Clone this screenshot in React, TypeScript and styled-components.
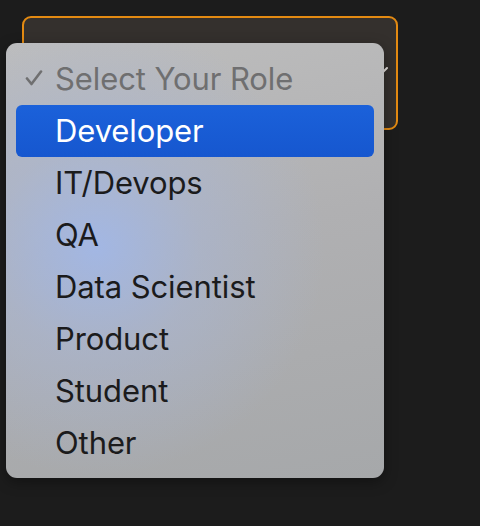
import styled, { createGlobalStyle } from "styled-components"

const GlobalStyle = createGlobalStyle`
  html, body {
    margin: 0;
    padding: 0;
    background: #1c1c1c;
  }
  body {
    font-family: Inter, "Liberation Sans", Arial, sans-serif;
  }
`

const Page = styled.div`
  width: 480px;
  height: 526px;
  padding: 16px 0 0 22px;
  box-sizing: border-box;
`

const SelectWrapper = styled.div`
  position: relative;
  width: 376px;
`

const SelectBox = styled.div`
  box-sizing: border-box;
  width: 376px;
  height: 114px;
  border: 2px solid #e38a12;
  border-radius: 9px;
  background: #34302d;
  display: flex;
  align-items: center;
  justify-content: flex-end;
  padding: 0 6px 2px 0;
`

const Menu = styled.div`
  position: absolute;
  left: -16px;
  top: 27px;
  width: 378px;
  height: 435px;
  box-sizing: border-box;
  padding: 10px 10px 9px;
  border-radius: 11px;
  background:
    radial-gradient(circle at 24% 47%, rgba(160, 184, 236, 0.85) 0%, rgba(168, 182, 214, 0.55) 28%, rgba(170, 172, 178, 0) 62%),
    linear-gradient(170deg, #bdbdbd 0%, #b0b0b2 45%, #a6a8aa 100%);
  box-shadow: 0 4px 14px rgba(0, 0, 0, 0.35);
  display: flex;
  flex-direction: column;
`

const Row = styled.div<{ $active?: boolean; $muted?: boolean }>`
  height: 52px;
  flex: none;
  display: flex;
  align-items: center;
  border-radius: 6px;
  padding: 0 0 2px 9px;
  box-sizing: border-box;
  font-size: 31px;
  letter-spacing: -0.1px;
  color: ${p => (p.$active ? "#ffffff" : p.$muted ? "#6f6f70" : "#1b1b1c")};
  background: ${p => (p.$active ? "linear-gradient(180deg, #1b61da 0%, #1657cf 100%)" : "transparent")};
`

const CheckSlot = styled.span`
  width: 30px;
  display: flex;
  align-items: center;
`

const items = ["Developer", "IT/Devops", "QA", "Data Scientist", "Product", "Student", "Other"]

function Check() {
  return (
    <svg width="18" height="16" viewBox="0 0 18 16">
      <path d="M2 8.5 L6.5 14 L16 1.5" fill="none" stroke="#6f6f70" strokeWidth="2.6" strokeLinecap="round" strokeLinejoin="round" />
    </svg>
  )
}

function Chevron() {
  return (
    <svg width="22" height="12" viewBox="0 0 22 12">
      <path d="M3 2 L11 10 L19 2" fill="none" stroke="#e8e4e0" strokeWidth="2" strokeLinecap="round" strokeLinejoin="round" />
    </svg>
  )
}

export default function App() {
  return (
    <>
      <GlobalStyle />
      <Page>
        <SelectWrapper>
          <SelectBox>
            <Chevron />
          </SelectBox>
          <Menu>
            <Row $muted>
              <CheckSlot><Check /></CheckSlot>
              Select Your Role
            </Row>
            {items.map((item, i) => (
              <Row key={item} $active={i === 0}>
                <CheckSlot />
                {item}
              </Row>
            ))}
          </Menu>
        </SelectWrapper>
      </Page>
    </>
  )
}
